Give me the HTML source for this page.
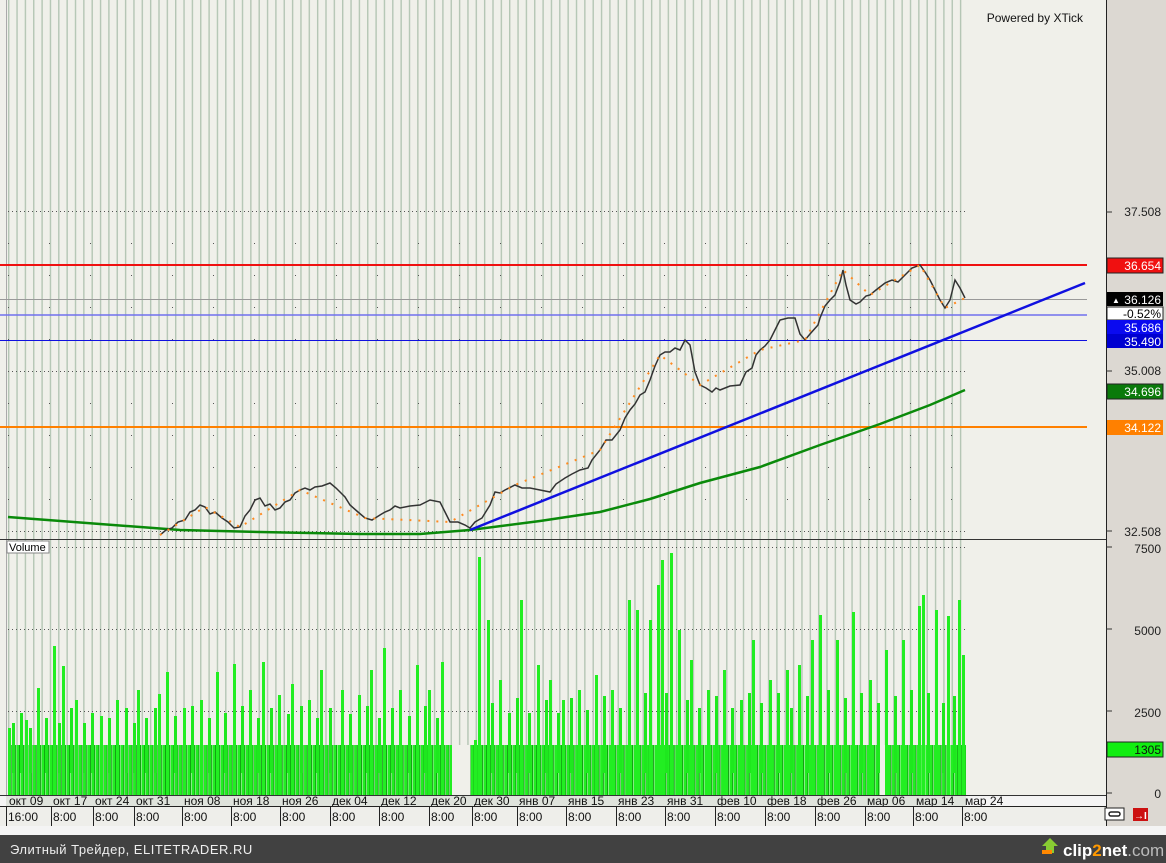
<!DOCTYPE html><html><head><meta charset="utf-8"><style>
body{margin:0;width:1166px;height:863px;overflow:hidden;background:#f4f4f4;font-family:"Liberation Sans",sans-serif}
</style></head><body>
<svg width="1166" height="863" xmlns="http://www.w3.org/2000/svg" style="position:absolute;left:0;top:0" font-family="Liberation Sans, sans-serif">
<defs>
<pattern id="vl" x="8" y="0" width="8.35" height="10" patternUnits="userSpaceOnUse"><rect x="0" y="0" width="1.4" height="10" fill="#b4c6b4"/></pattern>
<pattern id="vb" x="8" y="0" width="4.17" height="10" patternUnits="userSpaceOnUse"><rect x="0" y="0" width="2.8" height="10" fill="#22ee22"/><rect x="2.8" y="0" width="0.9" height="10" fill="#0a9a0a"/></pattern>
</defs>
<rect x="0" y="0" width="1106" height="795" fill="#f0f0ea"/>
<rect x="1106" y="0" width="60" height="826" fill="#dcd8d2"/>
<line x1="1106.5" y1="0" x2="1106.5" y2="826" stroke="#222"/>
<rect x="6" y="0" width="960" height="795" fill="url(#vl)"/>
<line x1="6.5" y1="0" x2="6.5" y2="826" stroke="#aaa"/>
<g stroke="#555" stroke-dasharray="1,3" stroke-width="1">
<line x1="8" y1="211.5" x2="966" y2="211.5"/><line x1="8" y1="243.5" x2="966" y2="243.5" stroke-dasharray="1,40"/><line x1="8" y1="275.5" x2="966" y2="275.5" stroke-dasharray="1,40"/><line x1="8" y1="307.5" x2="966" y2="307.5" stroke-dasharray="1,40"/><line x1="8" y1="339.5" x2="966" y2="339.5" stroke-dasharray="1,40"/><line x1="8" y1="371.5" x2="966" y2="371.5"/><line x1="8" y1="403.5" x2="966" y2="403.5" stroke-dasharray="1,40"/><line x1="8" y1="435.5" x2="966" y2="435.5" stroke-dasharray="1,40"/><line x1="8" y1="467.5" x2="966" y2="467.5" stroke-dasharray="1,40"/><line x1="8" y1="499.5" x2="966" y2="499.5" stroke-dasharray="1,40"/><line x1="8" y1="531.5" x2="966" y2="531.5"/>
<line x1="8" y1="547.5" x2="966" y2="547.5"/><line x1="8" y1="629.5" x2="966" y2="629.5"/><line x1="8" y1="711.5" x2="966" y2="711.5"/>
</g>
<line x1="0" y1="265" x2="1087" y2="265" stroke="#f01010" stroke-width="2"/>
<line x1="0" y1="299.5" x2="1087" y2="299.5" stroke="#999"/>
<line x1="0" y1="315" x2="1087" y2="315" stroke="#7070ee" stroke-width="1.5"/>
<line x1="0" y1="340.5" x2="1087" y2="340.5" stroke="#1010e0"/>
<line x1="0" y1="427" x2="1087" y2="427" stroke="#ff8000" stroke-width="2"/>
<polyline fill="none" stroke="#0a8a0a" stroke-width="2.5" points="8,517 100,524 180,530 260,532 360,534 420,534 470,530 540,521 600,512 650,499 700,483 760,467 820,445 880,424 930,405 965,390"/>
<line x1="470" y1="530" x2="1085" y2="283" stroke="#1010e0" stroke-width="2.5"/>
<polyline fill="none" stroke="#333" stroke-width="1.5" points="160,535 166,530 172,528 178,522 185,520 190,512 195,510 200,505 205,507 210,514 215,512 222,518 228,522 234,528 240,527 245,516 250,510 255,500 260,498 265,506 270,504 275,510 280,508 285,502 290,500 295,493 300,490 305,488 310,490 315,487 322,486 330,483 336,488 345,497 350,505 358,512 365,518 372,520 380,515 385,512 390,510 395,506 400,508 410,506 420,505 430,500 440,502 445,512 450,522 458,522 465,525 470,528 475,522 482,518 490,505 495,492 500,493 505,490 515,485 522,488 530,488 540,490 550,492 556,484 565,478 572,474 580,470 588,468 592,460 600,450 606,440 612,440 620,430 625,418 630,410 635,404 640,395 645,392 650,380 655,366 660,355 665,352 670,352 675,348 680,350 685,340 690,345 695,372 700,385 706,388 712,392 716,388 720,390 730,386 740,385 746,372 752,368 756,355 760,350 765,346 770,340 775,330 780,320 788,318 795,318 800,334 805,340 810,334 818,325 820,318 825,306 830,300 835,295 840,282 843,270 846,285 850,300 856,304 860,302 866,296 870,295 876,290 885,283 892,280 898,282 905,275 912,268 920,265 925,272 930,280 935,290 940,300 945,308 950,300 955,280 960,288 965,298"/>
<polyline fill="none" stroke="#ff8a20" stroke-width="2" stroke-dasharray="2,7" points="160,535 205,507 240,527 300,490 365,518 450,522 515,485 600,450 660,355 700,385 760,350 805,340 843,270 870,295 920,265 945,308 965,298"/>
<line x1="0" y1="539.5" x2="1106" y2="539.5" stroke="#333"/>
<rect x="7" y="541" width="42" height="12" fill="#fff" stroke="#888"/>
<text x="9" y="551" font-size="11" fill="#000">Volume</text>
<g>
<rect x="8" y="745" width="958" height="50" fill="url(#vb)"/>
<g fill="#1ee81e" transform="translate(0,-22)">
<rect x="12" y="745" width="3" height="50"/><rect x="20" y="735" width="3" height="60"/><rect x="29" y="750" width="3" height="45"/><rect x="45" y="740" width="3" height="55"/><rect x="58" y="745" width="3" height="50"/><rect x="70" y="730" width="3" height="65"/><rect x="83" y="745" width="3" height="50"/><rect x="91" y="735" width="3" height="60"/><rect x="108" y="740" width="3" height="55"/><rect x="125" y="730" width="3" height="65"/><rect x="133" y="745" width="3" height="50"/><rect x="145" y="740" width="3" height="55"/><rect x="154" y="730" width="3" height="65"/><rect x="174" y="738" width="3" height="57"/><rect x="191" y="728" width="3" height="67"/><rect x="208" y="740" width="3" height="55"/><rect x="224" y="735" width="3" height="60"/><rect x="241" y="728" width="3" height="67"/><rect x="257" y="740" width="3" height="55"/><rect x="270" y="730" width="3" height="65"/><rect x="287" y="736" width="3" height="59"/><rect x="300" y="728" width="3" height="67"/><rect x="316" y="740" width="3" height="55"/><rect x="329" y="730" width="3" height="65"/><rect x="349" y="736" width="3" height="59"/><rect x="366" y="728" width="3" height="67"/><rect x="378" y="740" width="3" height="55"/><rect x="391" y="730" width="3" height="65"/><rect x="408" y="738" width="3" height="57"/><rect x="424" y="728" width="3" height="67"/><rect x="436" y="740" width="3" height="55"/><rect x="491" y="725" width="3" height="70"/><rect x="508" y="735" width="3" height="60"/><rect x="516" y="720" width="3" height="75"/><rect x="528" y="735" width="3" height="60"/><rect x="545" y="722" width="3" height="73"/><rect x="557" y="735" width="3" height="60"/><rect x="570" y="720" width="3" height="75"/><rect x="586" y="732" width="3" height="63"/><rect x="603" y="718" width="3" height="77"/><rect x="619" y="730" width="3" height="65"/><rect x="644" y="715" width="3" height="80"/><rect x="665" y="715" width="3" height="80"/><rect x="686" y="722" width="3" height="73"/><rect x="698" y="730" width="3" height="65"/><rect x="715" y="718" width="3" height="77"/><rect x="731" y="730" width="3" height="65"/><rect x="748" y="715" width="3" height="80"/><rect x="760" y="725" width="3" height="70"/><rect x="777" y="715" width="3" height="80"/><rect x="790" y="730" width="3" height="65"/><rect x="806" y="718" width="3" height="77"/><rect x="827" y="712" width="3" height="83"/><rect x="844" y="720" width="3" height="75"/><rect x="860" y="715" width="3" height="80"/><rect x="877" y="725" width="3" height="70"/><rect x="894" y="718" width="3" height="77"/><rect x="910" y="712" width="3" height="83"/><rect x="927" y="715" width="3" height="80"/><rect x="942" y="725" width="3" height="70"/><rect x="953" y="718" width="3" height="77"/>
</g>
<rect x="452" y="745" width="18" height="50" fill="#f0f0ea"/>
<g fill="#22ee22">
<rect x="8" y="728" width="3" height="67"/><rect x="25" y="720" width="3" height="75"/><rect x="37" y="688" width="3" height="107"/><rect x="53" y="646" width="3" height="149"/><rect x="62" y="666" width="3" height="129"/><rect x="75" y="700" width="3" height="95"/><rect x="100" y="716" width="3" height="79"/><rect x="116" y="700" width="3" height="95"/><rect x="137" y="690" width="3" height="105"/><rect x="158" y="694" width="3" height="101"/><rect x="166" y="672" width="3" height="123"/><rect x="183" y="708" width="3" height="87"/><rect x="200" y="700" width="3" height="95"/><rect x="216" y="672" width="3" height="123"/><rect x="233" y="664" width="3" height="131"/><rect x="249" y="690" width="3" height="105"/><rect x="262" y="662" width="3" height="133"/><rect x="278" y="695" width="3" height="100"/><rect x="291" y="684" width="3" height="111"/><rect x="308" y="700" width="3" height="95"/><rect x="320" y="670" width="3" height="125"/><rect x="341" y="690" width="3" height="105"/><rect x="358" y="695" width="3" height="100"/><rect x="370" y="670" width="3" height="125"/><rect x="383" y="648" width="3" height="147"/><rect x="399" y="690" width="3" height="105"/><rect x="416" y="665" width="3" height="130"/><rect x="428" y="690" width="3" height="105"/><rect x="441" y="662" width="3" height="133"/><rect x="474" y="740" width="3" height="55"/><rect x="478" y="557" width="3" height="238"/><rect x="487" y="620" width="3" height="175"/><rect x="499" y="680" width="3" height="115"/><rect x="520" y="600" width="3" height="195"/><rect x="537" y="665" width="3" height="130"/><rect x="549" y="680" width="3" height="115"/><rect x="562" y="700" width="3" height="95"/><rect x="578" y="690" width="3" height="105"/><rect x="595" y="675" width="3" height="120"/><rect x="611" y="690" width="3" height="105"/><rect x="628" y="600" width="3" height="195"/><rect x="636" y="610" width="3" height="185"/><rect x="649" y="620" width="3" height="175"/><rect x="657" y="585" width="3" height="210"/><rect x="661" y="560" width="3" height="235"/><rect x="670" y="553" width="3" height="242"/><rect x="678" y="630" width="3" height="165"/><rect x="690" y="660" width="3" height="135"/><rect x="707" y="690" width="3" height="105"/><rect x="723" y="670" width="3" height="125"/><rect x="740" y="700" width="3" height="95"/><rect x="752" y="640" width="3" height="155"/><rect x="769" y="680" width="3" height="115"/><rect x="786" y="670" width="3" height="125"/><rect x="798" y="665" width="3" height="130"/><rect x="811" y="640" width="3" height="155"/><rect x="819" y="615" width="3" height="180"/><rect x="836" y="640" width="3" height="155"/><rect x="852" y="612" width="3" height="183"/><rect x="869" y="680" width="3" height="115"/><rect x="885" y="650" width="3" height="145"/><rect x="902" y="640" width="3" height="155"/><rect x="918" y="606" width="3" height="189"/><rect x="922" y="595" width="3" height="200"/><rect x="935" y="610" width="3" height="185"/><rect x="947" y="616" width="3" height="179"/><rect x="958" y="600" width="3" height="195"/><rect x="962" y="655" width="3" height="140"/>
</g>
<rect x="880" y="745" width="5" height="50" fill="#f0f0ea"/>
</g>
<line x1="0" y1="795.5" x2="1106" y2="795.5" stroke="#333"/>
<rect x="6" y="796" width="960" height="10" fill="#dfe3dc"/>
<g font-size="12" fill="#111">
<text x="9" y="805">окт 09</text><text x="53" y="805">окт 17</text><text x="95" y="805">окт 24</text><text x="136" y="805">окт 31</text><text x="184" y="805">ноя 08</text><text x="233" y="805">ноя 18</text><text x="282" y="805">ноя 26</text><text x="332" y="805">дек 04</text><text x="381" y="805">дек 12</text><text x="431" y="805">дек 20</text><text x="474" y="805">дек 30</text><text x="519" y="805">янв 07</text><text x="568" y="805">янв 15</text><text x="618" y="805">янв 23</text><text x="667" y="805">янв 31</text><text x="717" y="805">фев 10</text><text x="767" y="805">фев 18</text><text x="817" y="805">фев 26</text><text x="867" y="805">мар 06</text><text x="916" y="805">мар 14</text><text x="965" y="805">мар 24</text>
</g>
<line x1="0" y1="806.5" x2="1106" y2="806.5" stroke="#222"/>
<rect x="0" y="807" width="1106" height="19" fill="#eeeeea"/>
<g stroke="#222"><line x1="6.5" y1="806" x2="6.5" y2="826"/><line x1="51.5" y1="806" x2="51.5" y2="826"/><line x1="93.5" y1="806" x2="93.5" y2="826"/><line x1="134.5" y1="806" x2="134.5" y2="826"/><line x1="182.5" y1="806" x2="182.5" y2="826"/><line x1="231.5" y1="806" x2="231.5" y2="826"/><line x1="280.5" y1="806" x2="280.5" y2="826"/><line x1="330.5" y1="806" x2="330.5" y2="826"/><line x1="379.5" y1="806" x2="379.5" y2="826"/><line x1="429.5" y1="806" x2="429.5" y2="826"/><line x1="472.5" y1="806" x2="472.5" y2="826"/><line x1="517.5" y1="806" x2="517.5" y2="826"/><line x1="566.5" y1="806" x2="566.5" y2="826"/><line x1="616.5" y1="806" x2="616.5" y2="826"/><line x1="665.5" y1="806" x2="665.5" y2="826"/><line x1="715.5" y1="806" x2="715.5" y2="826"/><line x1="765.5" y1="806" x2="765.5" y2="826"/><line x1="815.5" y1="806" x2="815.5" y2="826"/><line x1="865.5" y1="806" x2="865.5" y2="826"/><line x1="913.5" y1="806" x2="913.5" y2="826"/><line x1="962.5" y1="806" x2="962.5" y2="826"/></g>
<g font-size="12" fill="#111"><text x="8" y="821">16:00</text><text x="53" y="821">8:00</text><text x="95" y="821">8:00</text><text x="136" y="821">8:00</text><text x="184" y="821">8:00</text><text x="233" y="821">8:00</text><text x="282" y="821">8:00</text><text x="332" y="821">8:00</text><text x="381" y="821">8:00</text><text x="431" y="821">8:00</text><text x="474" y="821">8:00</text><text x="519" y="821">8:00</text><text x="568" y="821">8:00</text><text x="618" y="821">8:00</text><text x="667" y="821">8:00</text><text x="717" y="821">8:00</text><text x="767" y="821">8:00</text><text x="817" y="821">8:00</text><text x="867" y="821">8:00</text><text x="915" y="821">8:00</text><text x="964" y="821">8:00</text></g>
<rect x="1105" y="808" width="19" height="12" fill="#fff" stroke="#222"/><rect x="1109" y="812" width="11" height="4" rx="2" fill="none" stroke="#222" stroke-width="1.5"/>
<rect x="1133" y="808" width="15" height="13" fill="#cc1111"/><text x="1134" y="819" font-size="10" fill="#fff" font-weight="bold">→I</text>
<text x="1083" y="22" font-size="12" fill="#111" text-anchor="end">Powered by XTick</text>
<g font-size="12" text-anchor="end">
<text x="1161" y="216" fill="#222">37.508</text><text x="1161" y="375" fill="#222">35.008</text><text x="1161" y="536" fill="#222">32.508</text>
<rect x="1107" y="258" width="56" height="15" fill="#f01010" stroke="#222"/><text x="1161" y="270" fill="#fff">36.654</text>
<rect x="1107" y="292" width="56" height="14" fill="#000"/><text x="1161" y="304" fill="#fff">36.126</text><text x="1112" y="303" fill="#fff" font-size="8" text-anchor="start">▲</text>
<rect x="1107" y="307" width="56" height="13" fill="#fff" stroke="#222"/><text x="1161" y="318" fill="#000">-0.52%</text>
<rect x="1107" y="320" width="56" height="14" fill="#0a0af0"/><text x="1161" y="332" fill="#fff">35.686</text>
<rect x="1107" y="334" width="56" height="14" fill="#0000d0"/><text x="1161" y="346" fill="#fff">35.490</text>
<rect x="1107" y="384" width="56" height="15" fill="#0a7a0a" stroke="#222"/><text x="1161" y="396" fill="#fff">34.696</text>
<rect x="1107" y="420" width="56" height="15" fill="#ff8000"/><text x="1161" y="432" fill="#fff">34.122</text>
<text x="1161" y="553" fill="#222">7500</text><text x="1161" y="635" fill="#222">5000</text><text x="1161" y="717" fill="#222">2500</text>
<rect x="1107" y="742" width="56" height="15" fill="#11ee11" stroke="#222"/><text x="1161" y="754" fill="#111">1305</text>
<text x="1161" y="798" fill="#222">0</text>
</g>
<g stroke="#333"><line x1="1106" y1="212" x2="1112" y2="212"/><line x1="1106" y1="371" x2="1112" y2="371"/><line x1="1106" y1="531" x2="1112" y2="531"/><line x1="1106" y1="547" x2="1112" y2="547"/><line x1="1106" y1="629" x2="1112" y2="629"/><line x1="1106" y1="711" x2="1112" y2="711"/><line x1="1106" y1="793" x2="1112" y2="793"/></g>
<rect x="0" y="835" width="1166" height="28" fill="#414141"/>
<text x="10" y="854" font-size="13" fill="#eee" letter-spacing="0.5">Элитный Трейдер, ELITETRADER.RU</text>
<path d="M1050 838 L1058 846 L1054 846 L1054 853 L1046 853 L1046 846 L1042 846 Z" fill="#8c3"/>
<rect x="1042" y="850" width="10" height="4" fill="#f80"/>
<text x="1063" y="856" font-size="17" font-weight="bold" fill="#fff">clip<tspan fill="#f90">2</tspan>net<tspan fill="#bbb" font-weight="normal">.com</tspan></text>
</svg>
</body></html>
